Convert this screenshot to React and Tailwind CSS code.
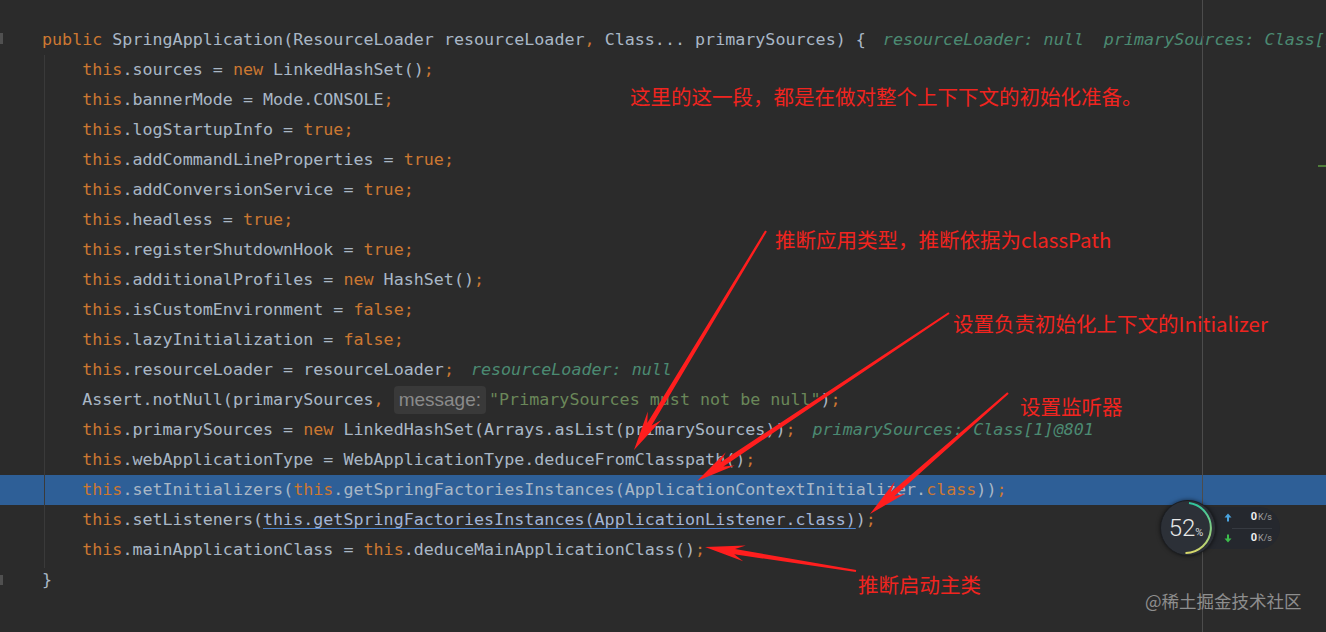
import React from "react";

const KW = new Set(["this", "new", "true", "false", "public", "private", "class"]);

function code(s, keyPrefix = "c") {
  return s
    .split(/([A-Za-z_]+|[;,])/)
    .filter(Boolean)
    .map((t, i) =>
      KW.has(t) || t === ";" || t === "," ? (
        <span key={keyPrefix + i} className="text-[#cc7832]">
          {t}
        </span>
      ) : (
        <span key={keyPrefix + i}>{t}</span>
      )
    );
}

function Hint({ children }) {
  return <span className="ml-[17px] italic text-[#4b8a72]">{children}</span>;
}

function Line({ children, hl }) {
  return (
    <div
      className={
        hl
          ? "h-[30px] flex items-center whitespace-pre pl-[42px] bg-[#2e5f97]"
          : "h-[30px] flex items-center whitespace-pre pl-[42px]"
      }
    >
      {children}
    </div>
  );
}

function arrowPoints(x1, y1, x2, y2) {
  const dx = x2 - x1;
  const dy = y2 - y1;
  const L = Math.hypot(dx, dy);
  const ux = dx / L;
  const uy = dy / L;
  const nx = -uy;
  const ny = ux;
  const P = (d, w) => `${(x2 - ux * d + nx * w).toFixed(1)},${(y2 - uy * d + ny * w).toFixed(1)}`;
  return [P(L, 1), P(30, 2.6), P(40, 8), P(0, 0), P(40, -8), P(30, -2.6), P(L, -1)].join(" ");
}

const arrows = [
  [766, 231, 634, 450],
  [949, 313, 697, 481],
  [1008, 393, 870, 514],
  [856, 571, 705, 547],
];

const notes = [
  { text: "这里的这一段，都是在做对整个上下下文的初始化准备。", x: 630, y: 82 },
  { text: "推断应用类型，推断依据为classPath", x: 775, y: 225 },
  { text: "设置负责初始化上下文的Initializer", x: 953, y: 309 },
  { text: "设置监听器", x: 1020, y: 392 },
  { text: "推断启动主类", x: 858, y: 570 },
];

function SmallArrow({ up, color }) {
  return (
    <svg width="8" height="9" viewBox="0 0 8 9" className="shrink-0">
      {up ? (
        <path d="M4 0.5 L7.5 4.5 H5 V8.5 H3 V4.5 H0.5 Z" fill={color} />
      ) : (
        <path d="M4 8.5 L7.5 4.5 H5 V0.5 H3 V4.5 H0.5 Z" fill={color} />
      )}
    </svg>
  );
}

export default function App() {
  const body = [
    "this.sources = new LinkedHashSet();",
    "this.bannerMode = Mode.CONSOLE;",
    "this.logStartupInfo = true;",
    "this.addCommandLineProperties = true;",
    "this.addConversionService = true;",
    "this.headless = true;",
    "this.registerShutdownHook = true;",
    "this.additionalProfiles = new HashSet();",
    "this.isCustomEnvironment = false;",
    "this.lazyInitialization = false;",
  ];

  return (
    <div className="relative w-[1326px] h-[632px] overflow-hidden bg-[#2b2b2b]">
      {/* code */}
      <div className="pt-[25px] font-['DejaVu_Sans_Mono',monospace] text-[16.7px] text-[#a9b7c6]">
        <Line>
          {code("public SpringApplication(ResourceLoader resourceLoader, Class... primarySources) {")}
          <Hint>resourceLoader: null  primarySources: Class[1]@801</Hint>
        </Line>
        {body.map((b, i) => (
          <Line key={i}>{code("    " + b, "b" + i)}</Line>
        ))}
        <Line>
          {code("    this.resourceLoader = resourceLoader;")}
          <Hint>resourceLoader: null</Hint>
        </Line>
        <Line>
          {code("    Assert.notNull(primarySources, ")}
          <span className="inline-flex items-center h-[28px] px-[5px] mr-[3px] rounded-[4px] bg-[#393939] text-[#8a8a8a] font-['Liberation_Sans',sans-serif] text-[19px]">
            message:
          </span>
          <span className="text-[#6a8759]">"PrimarySources must not be null"</span>
          {code(");", "e")}
        </Line>
        <Line>
          {code("    this.primarySources = new LinkedHashSet(Arrays.asList(primarySources));")}
          <Hint>primarySources: Class[1]@801</Hint>
        </Line>
        <Line>{code("    this.webApplicationType = WebApplicationType.deduceFromClasspath();")}</Line>
        <Line hl>
          {code("    this.setInitializers(this.getSpringFactoriesInstances(ApplicationContextInitializer.class));")}
        </Line>
        <Line>
          {code("    this.setListeners(")}
          <span className="text-[#a3b5d6] underline decoration-[#4f86cf] underline-offset-[3px]">
            this.getSpringFactoriesInstances(ApplicationListener.class)
          </span>
          {code(");", "e")}
        </Line>
        <Line>{code("    this.mainApplicationClass = this.deduceMainApplicationClass();")}</Line>
        <Line>{code("}")}</Line>
      </div>

      {/* indent guide */}
      <div className="absolute left-[44px] top-[55px] w-px h-[513px] bg-[#3a3a3a]" />
      {/* right margin */}
      <div className="absolute left-[1202px] top-0 w-px h-[632px] bg-[#4c4c4c]" />
      {/* gutter fold markers */}
      <div className="absolute left-0 top-[33px] w-[3px] h-[11px] bg-[#505050]" />
      <div className="absolute left-0 top-[575px] w-[3px] h-[10px] bg-[#505050]" />
      {/* green change marker */}
      <div className="absolute left-[1318px] top-[165px] w-[8px] h-[2px] bg-[#4f7d3a]" />

      {/* red arrows */}
      <svg className="absolute left-0 top-0 pointer-events-none" width="1326" height="632" viewBox="0 0 1326 632">
        {arrows.map((a, i) => (
          <polygon key={i} points={arrowPoints(...a)} fill="#ff1e1e" />
        ))}
      </svg>

      {/* red notes */}
      {notes.map((n, i) => (
        <div
          key={i}
          className="absolute whitespace-nowrap font-['Noto_Sans_CJK_SC',sans-serif] text-[20.5px] leading-[28px] text-[#f0241f]"
          style={{ left: n.x, top: n.y }}
        >
          {n.text}
        </div>
      ))}

      {/* network / cpu widget */}
      <div className="absolute left-[1160px] top-[500px] flex items-center">
        <div className="relative z-10 w-[56px] h-[56px] rounded-full bg-[#2c3037] border border-[#1b1d21] shadow-[0_0_4px_rgba(0,0,0,0.6)] flex items-center justify-center">
          <svg className="absolute left-0 top-0" width="54" height="54" viewBox="0 0 54 54">
            <defs>
              <linearGradient id="arcg" x1="0" y1="0" x2="0" y2="1">
                <stop offset="0" stopColor="#2ec59e" />
                <stop offset="1" stopColor="#d8d86a" />
              </linearGradient>
            </defs>
            <path d="M 28 2.1 A 25 25 0 0 1 24.5 51.9" fill="none" stroke="url(#arcg)" strokeWidth="2" />
          </svg>
          <span className="relative font-['Roboto',sans-serif] font-light text-[24px] leading-none text-[#e8e8e8] -ml-[4px]">
            52
          </span>
          <span className="relative font-['Roboto',sans-serif] text-[11px] leading-none text-[#d8d8d8] mt-[9px]">%</span>
        </div>
        <div className="-ml-[12px] w-[76px] h-[42px] rounded-r-full bg-[#25282e] flex flex-col justify-center pl-[20px] pr-[8px] font-['Roboto',sans-serif]">
          <div className="flex items-center h-[20px]">
            <SmallArrow up color="#4aa4e0" />
            <span className="ml-auto text-[11px] font-bold text-[#eeeeee]">0</span>
            <span className="text-[9px] text-[#a0a0a0] ml-[1px]">K/s</span>
          </div>
          <div className="h-px bg-[#363a41] ml-[8px]" />
          <div className="flex items-center h-[20px]">
            <SmallArrow color="#3cbc4c" />
            <span className="ml-auto text-[11px] font-bold text-[#eeeeee]">0</span>
            <span className="text-[9px] text-[#a0a0a0] ml-[1px]">K/s</span>
          </div>
        </div>
      </div>

      {/* watermark */}
      <div className="absolute left-[1145px] top-[588px] whitespace-nowrap font-['Noto_Sans_CJK_SC',sans-serif] text-[17.5px] leading-[26px] text-[#8e8e8e]">
        @稀土掘金技术社区
      </div>
    </div>
  );
}
